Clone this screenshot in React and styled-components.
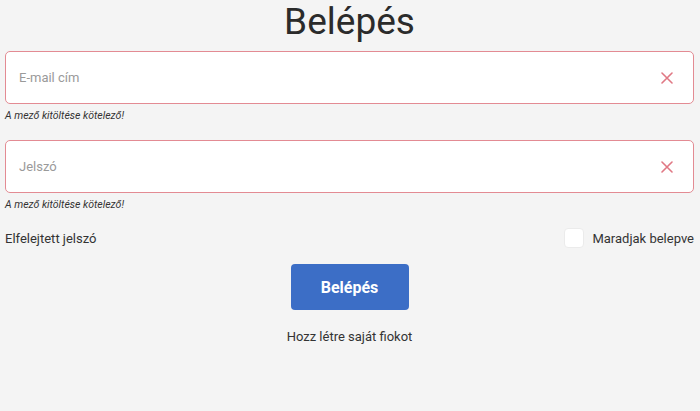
import React from "react";
import styled, { createGlobalStyle } from "styled-components";

const Global = createGlobalStyle`
  html, body { margin: 0; padding: 0; background: #f4f4f4; }
  body { font-family: Roboto, "Liberation Sans", sans-serif; color: #333; }
`;

const Page = styled.div`
  padding: 0 6px 0 5px;
  display: flex;
  flex-direction: column;
`;

const Title = styled.h1`
  margin: 0;
  height: 51px;
  line-height: 44px;
  text-align: center;
  font-size: 37px;
  font-weight: 400;
  color: #2b2b2b;
`;

const Field = styled.div`
  display: flex;
  flex-direction: column;
  margin-bottom: ${(p) => p.$mb}px;
`;

const InputBox = styled.div`
  height: 51px;
  border: 1px solid #e38b93;
  border-radius: 5px;
  background: #fff;
  display: flex;
  align-items: center;
  padding: 0 20px 0 13px;
`;

const Input = styled.input`
  flex: 1;
  border: none;
  outline: none;
  background: transparent;
  font-family: inherit;
  font-size: 13px;
  padding: 0;
  color: #333;
  &::placeholder { color: #9a9a9a; }
`;

const ClearIcon = styled.svg`
  width: 12px;
  height: 12px;
  flex: none;
`;

const Error = styled.div`
  font-size: 10.5px;
  font-style: italic;
  color: #333;
  margin-top: 5px;
  line-height: 13px;
`;

const Row = styled.div`
  display: flex;
  justify-content: space-between;
  align-items: center;
  font-size: 13px;
  color: #333;
  margin-top: 17px;
`;

const Remember = styled.label`
  display: flex;
  align-items: center;
  gap: 8px;
`;

const Box = styled.span`
  width: 18px;
  height: 18px;
  border-radius: 4px;
  background: #fff;
  border: 1px solid #ebebeb;
`;

const Button = styled.button`
  align-self: center;
  margin-top: 16px;
  width: 118px;
  height: 46px;
  border: none;
  border-radius: 4px;
  background: #3c6ec6;
  color: #fff;
  font-family: inherit;
  font-weight: 700;
  font-size: 16px;
`;

const Footer = styled.div`
  text-align: center;
  font-size: 13px;
  color: #333;
  margin-top: 19px;
`;

const X = () => (
  <ClearIcon viewBox="0 0 12 12">
    <path d="M1 1L11 11M11 1L1 11" stroke="#e07884" strokeWidth="1.6" strokeLinecap="round" />
  </ClearIcon>
);

export default function App() {
  return (
    <Page>
      <Global />
      <Title>Belépés</Title>
      <Field $mb={18}>
        <InputBox>
          <Input placeholder="E-mail cím" />
          <X />
        </InputBox>
        <Error>A mező kitöltése kötelező!</Error>
      </Field>
      <Field $mb={0}>
        <InputBox>
          <Input placeholder="Jelszó" type="password" />
          <X />
        </InputBox>
        <Error>A mező kitöltése kötelező!</Error>
      </Field>
      <Row>
        <span>Elfelejtett jelszó</span>
        <Remember>
          <Box />
          Maradjak belepve
        </Remember>
      </Row>
      <Button>Belépés</Button>
      <Footer>Hozz létre saját fiokot</Footer>
    </Page>
  );
}
